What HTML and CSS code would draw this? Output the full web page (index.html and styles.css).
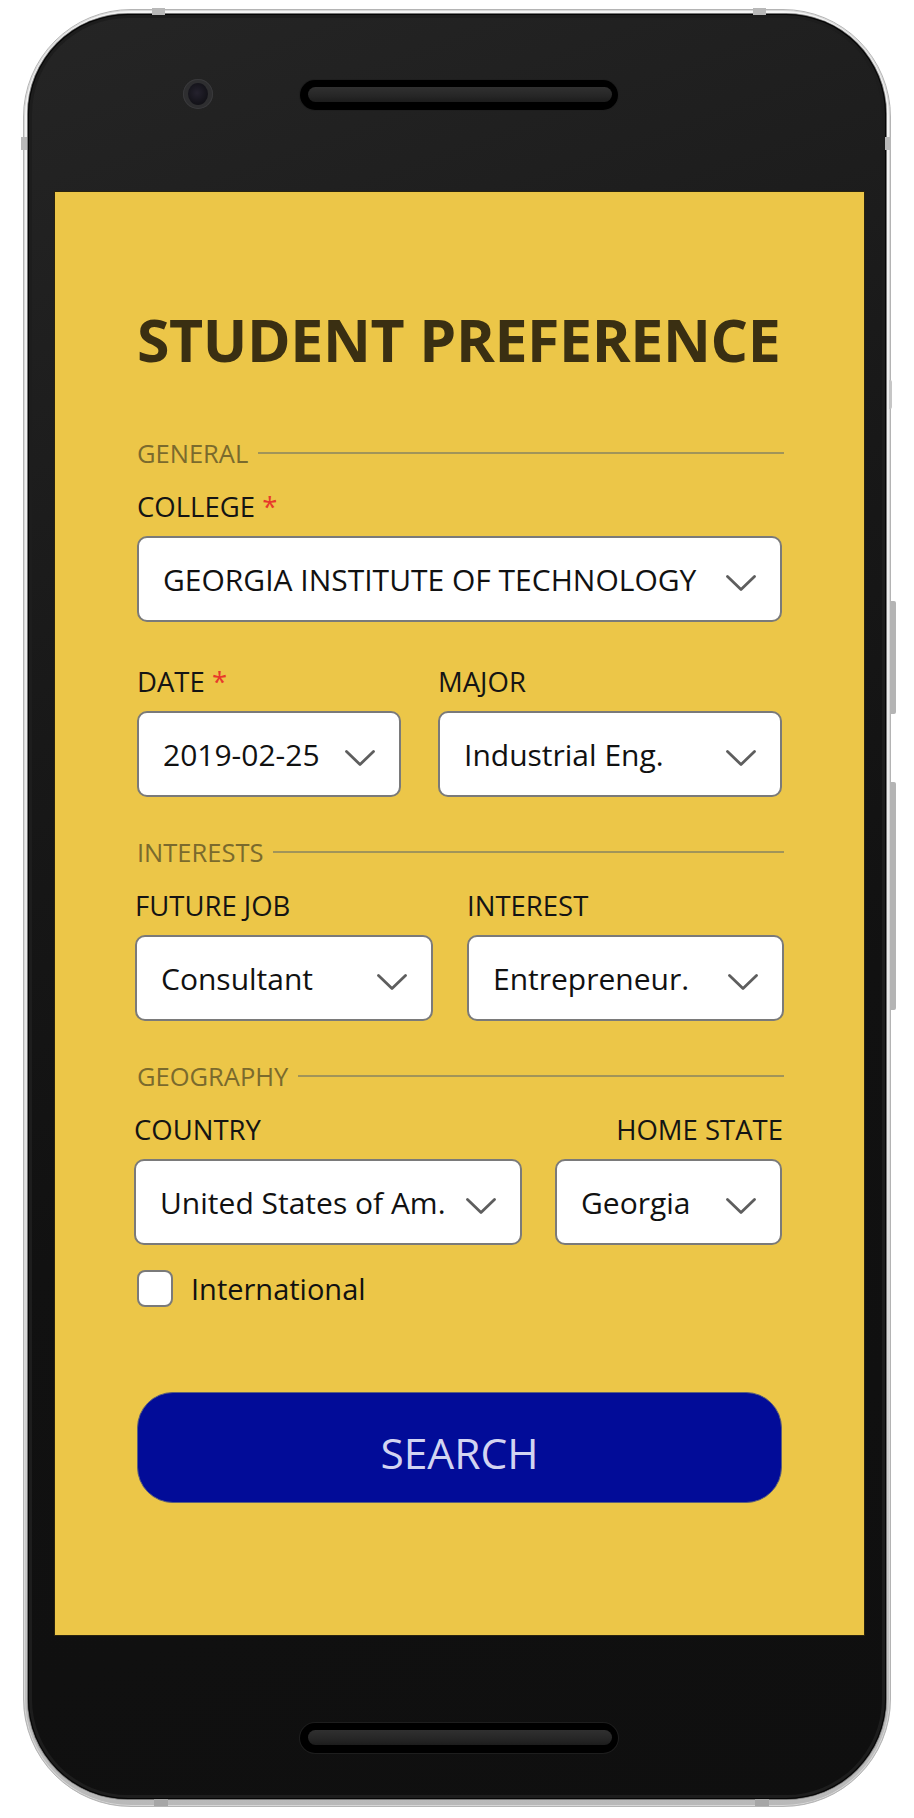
FILE: index.html
```html
<!DOCTYPE html>
<html lang="en">
<head>
<meta charset="utf-8">
<title>Student Preference</title>
<link rel="stylesheet" href="styles.css">
</head>
<body>
<div class="phone">
  <span class="nub nub-top-l"></span>
  <span class="nub nub-top-r"></span>
  <span class="nub nub-bot-l"></span>
  <span class="nub nub-bot-r"></span>
  <span class="nub nub-side-l"></span>
  <span class="nub nub-side-r"></span>
  <span class="key key-small"></span>
  <span class="key key-power"></span>
  <span class="key key-volume"></span>
  <div class="body">
    <div class="bezel-top">
      <span class="camera"><span class="lens"></span></span>
      <span class="speaker"><span class="grille"></span></span>
    </div>
    <main class="screen">
      <h1 class="title">STUDENT PREFERENCE</h1>

      <div class="section"><span class="section-name">GENERAL</span><span class="rule"></span></div>
      <div class="row row-one after-section">
        <div class="field">
          <div class="label">COLLEGE <span class="req">*</span></div>
          <div class="select"><span class="value">GEORGIA INSTITUTE OF TECHNOLOGY</span><svg class="chev" viewBox="0 0 30 16" width="30" height="16"><polyline points="1.5,1.5 15,14.5 28.5,1.5"/></svg></div>
        </div>
      </div>
      <div class="row row-date after-row">
        <div class="field">
          <div class="label">DATE <span class="req">*</span></div>
          <div class="select"><span class="value">2019-02-25</span><svg class="chev" viewBox="0 0 30 16" width="30" height="16"><polyline points="1.5,1.5 15,14.5 28.5,1.5"/></svg></div>
        </div>
        <div class="field">
          <div class="label">MAJOR</div>
          <div class="select"><span class="value">Industrial Eng.</span><svg class="chev" viewBox="0 0 30 16" width="30" height="16"><polyline points="1.5,1.5 15,14.5 28.5,1.5"/></svg></div>
        </div>
      </div>

      <div class="section after-row-section"><span class="section-name">INTERESTS</span><span class="rule"></span></div>
      <div class="row row-job after-section">
        <div class="field">
          <div class="label">FUTURE JOB</div>
          <div class="select"><span class="value">Consultant</span><svg class="chev" viewBox="0 0 30 16" width="30" height="16"><polyline points="1.5,1.5 15,14.5 28.5,1.5"/></svg></div>
        </div>
        <div class="field">
          <div class="label">INTEREST</div>
          <div class="select"><span class="value">Entrepreneur.</span><svg class="chev" viewBox="0 0 30 16" width="30" height="16"><polyline points="1.5,1.5 15,14.5 28.5,1.5"/></svg></div>
        </div>
      </div>

      <div class="section after-row-section"><span class="section-name">GEOGRAPHY</span><span class="rule"></span></div>
      <div class="row row-geo after-section">
        <div class="field">
          <div class="label">COUNTRY</div>
          <div class="select"><span class="value">United States of Am.</span><svg class="chev" viewBox="0 0 30 16" width="30" height="16"><polyline points="1.5,1.5 15,14.5 28.5,1.5"/></svg></div>
        </div>
        <div class="field">
          <div class="label label-right">HOME STATE</div>
          <div class="select"><span class="value">Georgia</span><svg class="chev" viewBox="0 0 30 16" width="30" height="16"><polyline points="1.5,1.5 15,14.5 28.5,1.5"/></svg></div>
        </div>
      </div>

      <div class="check"><span class="checkbox"></span><span class="check-text">International</span></div>

      <button class="search" type="button">SEARCH</button>
    </main>
    <div class="bezel-bottom">
      <span class="speaker"><span class="grille"></span></span>
    </div>
  </div>
</div>
</body>
</html>
```
FILE: styles.css
```css
html, body {
  margin: 0;
  padding: 0;
  background: #ffffff;
}

body {
  font-family: "Open Sans", "Noto Sans", sans-serif;
  width: 914px;
  height: 1818px;
  overflow: hidden;
}

/* ---------- phone frame ---------- */
.phone {
  position: relative;
  box-sizing: border-box;
  width: 868px;
  height: 1798px;
  margin: 9px 0 0 23px;
  padding: 4px 4px 7px 4px;
  border: 1px solid #b4b4b4;
  border-radius: 108px;
  background: linear-gradient(180deg, #f4f4f4 0%, #e6e6e6 60%, #b9b9b9 100%);
  box-shadow: inset 0 0 0 1px #d8d8d8;
}

.nub {
  position: absolute;
  background: #b8b8b8;
}
.nub-top-l { left: 128px; top: -2px; width: 13px; height: 7px; }
.nub-top-r { left: 729px; top: -2px; width: 13px; height: 7px; }
.nub-bot-l { left: 130px; top: 1789px; width: 14px; height: 7px; background: #a6a6a6; }
.nub-bot-r { left: 731px; top: 1789px; width: 14px; height: 7px; background: #a6a6a6; }
.nub-side-l { left: -3px; top: 127px; width: 6px; height: 13px; }
.nub-side-r { left: 861px; top: 127px; width: 6px; height: 13px; }

.key {
  position: absolute;
  background: #b4b4b4;
  border-radius: 0 2px 2px 0;
}
.key-small { left: 865px; top: 370px; width: 3px; height: 29px; background: #c6c6c6; }
.key-power { left: 866px; top: 591px; width: 6px; height: 113px; }
.key-volume { left: 866px; top: 772px; width: 6px; height: 228px; }

.body {
  height: 100%;
  display: flex;
  flex-direction: column;
  border-radius: 100px;
  background: linear-gradient(160deg, #252525 0%, #181818 35%, #111111 60%, #0f0f0f 100%);
  box-shadow: inset 0 0 0 1px #050505, inset 0 0 0 4px #1d1d1d, 0 0 0 1px #777777;
  overflow: hidden;
}

.bezel-top {
  height: 178px;
  box-sizing: border-box;
  padding: 65px 0 0 155px;
  display: flex;
  align-items: flex-start;
  gap: 87px;
  flex: none;
}

.camera {
  width: 30px;
  height: 30px;
  border-radius: 50%;
  background: #2e2e30;
  display: flex;
  align-items: center;
  justify-content: center;
  box-shadow: inset 0 0 0 1px #3a3a3c;
}
.lens {
  width: 20px;
  height: 22px;
  border-radius: 50%;
  background: radial-gradient(circle at 45% 45%, #25222e 0%, #15141b 60%, #0d0d10 100%);
}

.speaker {
  width: 318px;
  height: 30px;
  margin-top: 1px;
  box-sizing: border-box;
  border-radius: 15px;
  background: #000;
  padding: 7px 6px 8px 8px;
  display: flex;
  box-shadow: 0 0 0 1px #1e1e1e;
}
.grille {
  flex: 1;
  border-radius: 8px;
  background: linear-gradient(180deg, #303030 0%, #262626 60%, #1c1c1c 100%);
}

.bezel-bottom {
  flex: 1;
  padding: 88px 0 0 272px;
  box-sizing: border-box;
}
.bezel-bottom .speaker { margin-top: 0; }

/* ---------- screen ---------- */
.screen {
  flex: none;
  box-sizing: border-box;
  width: 809px;
  height: 1443px;
  margin-left: 27px;
  padding: 118px 82px 0 82px;
  background: #ecc648;
  box-shadow: 0 0 0 1px #2a230e;
  display: flex;
  flex-direction: column;
}

.title {
  margin: 0;
  font-size: 59px;
  line-height: 59px;
  font-weight: 700;
  letter-spacing: -0.4px;
  color: #3a2f12;
  white-space: nowrap;
}

.section {
  display: flex;
  align-items: center;
  gap: 10px;
  height: 26px;
  margin-top: 71px;
}
.section.after-row-section { margin-top: 42px; }
.section-name {
  font-size: 25.5px;
  line-height: 26px;
  color: #7a6a2d;
  white-space: nowrap;
}
.rule {
  flex: 1;
  height: 2px;
  margin-right: -2px;
  background: #a19459;
}

.row { display: grid; }
.row.after-section { margin-top: 27px; }
.row.after-row { margin-top: 46px; }
.row-one { grid-template-columns: 1fr; }
.row-date { grid-template-columns: 264px 1fr; column-gap: 37px; }
.row-job { grid-template-columns: 298px 1fr; column-gap: 34px; margin-left: -2px; margin-right: -2px; }
.row-geo { grid-template-columns: 388px 1fr; column-gap: 33px; margin-left: -3px; }

.field {
  display: flex;
  flex-direction: column;
  gap: 15px;
}

.label {
  font-size: 27.5px;
  line-height: 28px;
  height: 28px;
  color: #141414;
  white-space: nowrap;
}
.label-right { text-align: right; margin-right: -1px; }
.req { color: #e8392b; }

.select {
  box-sizing: border-box;
  height: 86px;
  display: flex;
  align-items: center;
  justify-content: space-between;
  padding: 2px 24px 0 24px;
  border: 2px solid #7a7a7a;
  border-radius: 10px;
  background: #ffffff;
}
.value {
  font-size: 30px;
  line-height: 30px;
  color: #111111;
  white-space: nowrap;
}
.chev {
  flex: none;
  margin-top: 6px;
  fill: none;
  stroke: #5e5e5e;
  stroke-width: 2.8;
  stroke-linecap: round;
  stroke-linejoin: round;
}

.check {
  display: flex;
  align-items: center;
  gap: 18px;
  margin-top: 25px;
}
.checkbox {
  box-sizing: border-box;
  width: 36px;
  height: 37px;
  border: 2px solid #7a7a7a;
  border-radius: 8px;
  background: #ffffff;
}
.check-text {
  font-size: 29px;
  line-height: 30px;
  color: #111111;
}

.search {
  box-sizing: border-box;
  margin-top: 85px;
  height: 111px;
  width: 100%;
  padding: 10px 0 0 0;
  border: 1.5px solid #5d6078;
  border-radius: 36px;
  background: #020c98;
  color: #d2d4f1;
  font-family: "Open Sans", "Noto Sans", sans-serif;
  font-size: 42.5px;
  line-height: 43px;
  text-align: center;
}
```
